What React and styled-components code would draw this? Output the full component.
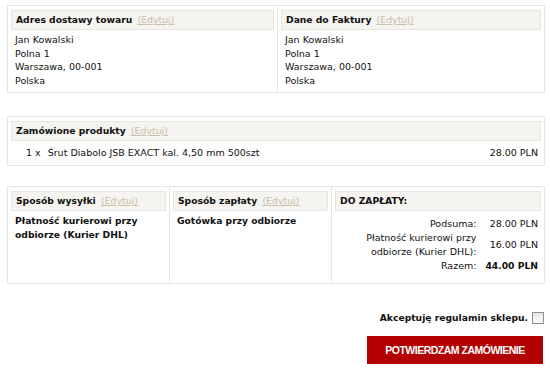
import React from "react";
import styled, { createGlobalStyle } from "styled-components";

const Global = createGlobalStyle`
  html, body { margin: 0; padding: 0; background: #fff; }
  body { font-family: "DejaVu Sans", Verdana, sans-serif; font-size: 9.5px; color: #111; }
`;

const Page = styled.div`
  width: 538px;
  padding: 5px 0 0 7px;
`;

const Box = styled.div`
  border: 1px solid #e6e6e4;
  display: grid;
  grid-template-columns: ${(p) => p.$cols || "1fr"};
  margin-bottom: ${(p) => p.$mb || 0}px;
`;

const Col = styled.div`
  padding: 4px 3px ${(p) => p.$pb ?? 6}px 3px;
  border-left: ${(p) => (p.$first ? "none" : "1px solid #e6e6e4")};
  min-height: ${(p) => p.$minh || 0}px;
  box-sizing: border-box;
`;

const Header = styled.div`
  background: #f5f4f0;
  border: 1px solid #e8e6df;
  height: 18px;
  line-height: 18px;
  padding: 0 4px;
  font-weight: bold;
  font-size: 9.2px;
  white-space: nowrap;
  overflow: hidden;
`;

const Edit = styled.a`
  font-weight: normal;
  font-size: 9.4px;
  color: #c8c0a6;
  text-decoration: underline;
  margin-left: 2px;
`;

const Lines = styled.div`
  padding: 3px 4px 0;
  line-height: ${(p) => (p.$bold ? 14 : 13.5)}px;
  font-weight: ${(p) => (p.$bold ? "bold" : "normal")};
  font-size: ${(p) => (p.$bold ? 9.2 : 9.5)}px;
`;

const ProductRow = styled.div`
  display: flex;
  justify-content: space-between;
  padding: 5px 3px 2px 15px;
  line-height: 14px;
`;

const Qty = styled.span`
  margin-right: 7px;
`;

const Totals = styled.div`
  display: grid;
  grid-template-columns: 1fr auto;
  column-gap: 9px;
  align-items: center;
  padding: 6px 3px 0 4px;
  line-height: 14px;
`;

const Label = styled.div`
  justify-self: end;
  text-align: right;
  max-width: ${(p) => p.$maxw || 200}px;
`;

const Value = styled.div`
  text-align: right;
  font-weight: ${(p) => (p.$bold ? "bold" : "normal")};
  font-size: ${(p) => (p.$bold ? 9.2 : 9.5)}px;
  white-space: nowrap;
`;

const Footer = styled.div`
  display: flex;
  flex-direction: column;
  align-items: flex-end;
  padding-top: 27px;
`;

const Accept = styled.label`
  display: flex;
  align-items: center;
  font-weight: bold;
  font-size: 9.2px;
  gap: 4px;
  line-height: 14px;
`;

const Check = styled.span`
  display: inline-block;
  width: 10px;
  height: 10px;
  border: 1px solid #8f8f8f;
  background: linear-gradient(#e6e6e6, #fafafa);
  margin-right: 1px;
`;

const Button = styled.button`
  margin-top: 11px;
  margin-right: 2px;
  width: 176px;
  height: 28px;
  border: none;
  background: #b30000;
  color: #fff;
  font-family: "Liberation Sans", Arial, sans-serif;
  font-weight: bold;
  font-size: 10.5px;
  letter-spacing: -0.5px;
  padding: 0;
  white-space: nowrap;
`;

export default function App() {
  return (
    <Page>
      <Global />
      <Box $cols="269px 1fr" $mb={23}>
        <Col $first $pb={5}>
          <Header>
            Adres dostawy towaru <Edit>(Edytuj)</Edit>
          </Header>
          <Lines>
            Jan Kowalski<br />Polna 1<br />Warszawa, 00-001<br />Polska
          </Lines>
        </Col>
        <Col $pb={5}>
          <Header>
            Dane do Faktury <Edit>(Edytuj)</Edit>
          </Header>
          <Lines>
            Jan Kowalski<br />Polna 1<br />Warszawa, 00-001<br />Polska
          </Lines>
        </Col>
      </Box>

      <Box $mb={20}>
        <Col $first $pb={3}>
          <Header>
            Zamówione produkty <Edit>(Edytuj)</Edit>
          </Header>
          <ProductRow>
            <span>
              <Qty>1 x</Qty>Śrut Diabolo JSB EXACT kal. 4,50 mm 500szt
            </span>
            <span>28.00 PLN</span>
          </ProductRow>
        </Col>
      </Box>

      <Box $cols="161px 162px 1fr">
        <Col $first $minh={96}>
          <Header>
            Sposób wysyłki <Edit>(Edytuj)</Edit>
          </Header>
          <Lines $bold>
            Płatność kurierowi przy<br />odbiorze (Kurier DHL)
          </Lines>
        </Col>
        <Col>
          <Header>
            Sposób zapłaty <Edit>(Edytuj)</Edit>
          </Header>
          <Lines $bold>Gotówka przy odbiorze</Lines>
        </Col>
        <Col>
          <Header>DO ZAPŁATY:</Header>
          <Totals>
            <Label>Podsuma:</Label>
            <Value>28.00 PLN</Value>
            <Label $maxw={112}>Płatność kurierowi przy odbiorze (Kurier DHL):</Label>
            <Value>16.00 PLN</Value>
            <Label>Razem:</Label>
            <Value $bold>44.00 PLN</Value>
          </Totals>
        </Col>
      </Box>

      <Footer>
        <Accept>
          Akceptuję regulamin sklepu.
          <Check />
        </Accept>
        <Button>POTWIERDZAM ZAMÓWIENIE</Button>
      </Footer>
    </Page>
  );
}
